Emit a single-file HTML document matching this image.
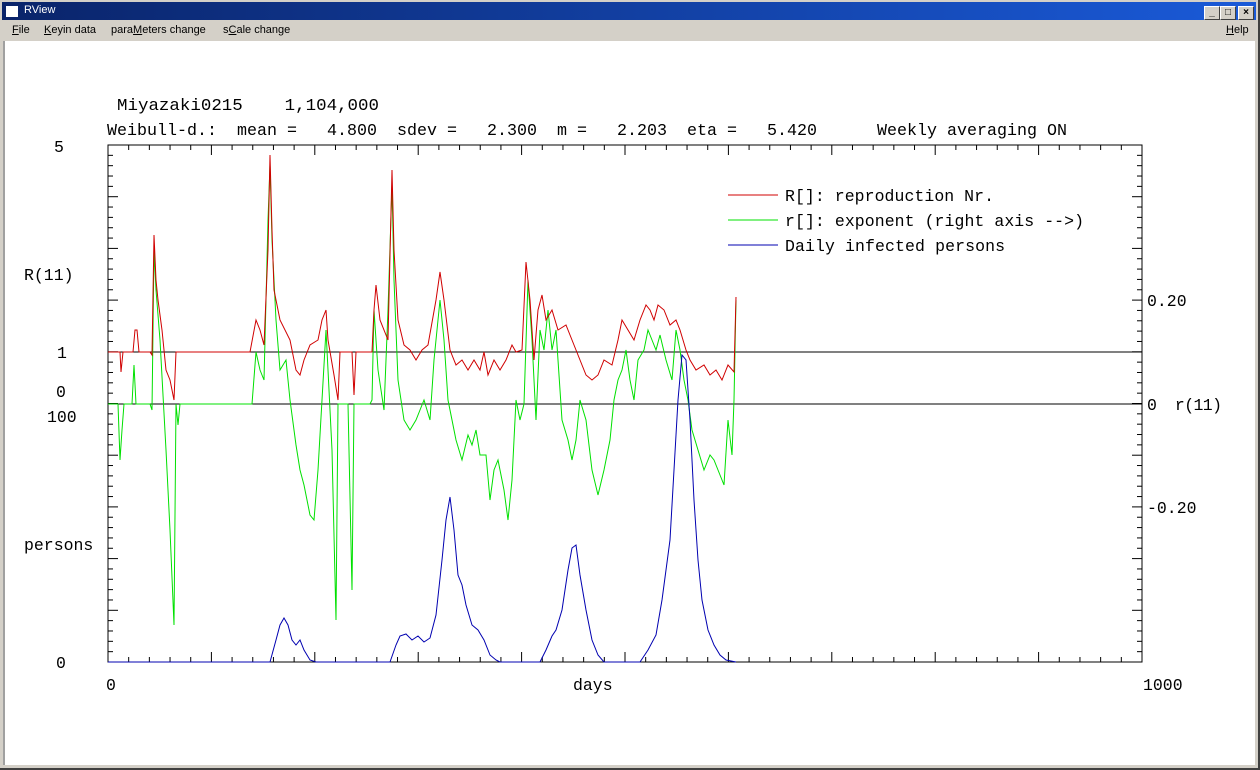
<!DOCTYPE html>
<html><head><style>
body{margin:0;width:1260px;height:770px;overflow:hidden;background:#d4d0c8;font-family:"Liberation Sans",Arial,sans-serif;}
#win{position:absolute;left:0;top:0;width:1258px;height:768px;border-right:2px solid #404040;border-bottom:2px solid #404040;background:#d4d0c8}
#title{position:absolute;left:2px;top:2px;width:1254px;height:18px;background:linear-gradient(90deg,#0a246a,#1a5ad8);}
#title span{position:absolute;left:22px;top:2px;color:#fff;font-size:11px}
#ico{position:absolute;left:4px;top:4px;width:12px;height:9px;background:#fff;border-top:2px solid #fff}
.b{position:absolute;top:4px;width:14px;height:12px;background:#d4d0c8;border:1px solid;border-color:#fff #404040 #404040 #fff;font-size:10px;line-height:12px;text-align:center;font-weight:bold}
#menu{position:absolute;left:2px;top:21px;width:1254px;height:19px;font-size:11px}
#menu span{position:absolute;top:3px}
#client{position:absolute;left:3px;top:41px;width:1250px;height:724px;background:#fff;border-left:2px solid #a0a0a0}
svg text{white-space:pre}
</style></head><body><div id="win">
<div id="title"><div id="ico"></div><span>RView</span>
<div class="b" style="left:1202px">_</div><div class="b" style="left:1218px">□</div><div class="b" style="left:1236px">×</div></div>
<div id="menu"><span style="left:10px"><u>F</u>ile</span><span style="left:42px"><u>K</u>eyin data</span><span style="left:109px">para<u>M</u>eters change</span><span style="left:221px">s<u>C</u>ale change</span><span style="left:1224px"><u>H</u>elp</span></div>
<div id="client"></div>
<svg width="1260" height="770" style="position:absolute;left:0;top:0" font-family="Liberation Mono,monospace" font-size="16.5" xml:space="preserve">
<g fill="#000">
<text x="117" y="110" textLength="262" lengthAdjust="spacingAndGlyphs">Miyazaki0215    1,104,000</text>
<text x="107" y="135" textLength="960" lengthAdjust="spacingAndGlyphs">Weibull-d.:  mean =   4.800  sdev =   2.300  m =   2.203  eta =   5.420      Weekly averaging ON</text>
<text x="54" y="152">5</text><text x="24" y="280">R(11)</text><text x="57" y="358">1</text><text x="56" y="397">0</text><text x="47" y="422">100</text><text x="24" y="550">persons</text><text x="56" y="668">0</text>
<text x="106" y="690">0</text><text x="573" y="690">days</text><text x="1143" y="690">1000</text>
<text x="1147" y="306">0.20</text><text x="1147" y="410" textLength="75">0  r(11)</text><text x="1147" y="513">-0.20</text>
<text x="785" y="201" textLength="209">R[]: reproduction Nr.</text><text x="785" y="226" textLength="299">r[]: exponent (right axis --&gt;)</text><text x="785" y="251" textLength="220">Daily infected persons</text>
</g>
<rect x="108" y="145" width="1034" height="517" fill="none" stroke="#000"/>
<line x1="108" y1="352" x2="1142" y2="352" stroke="#000"/><line x1="108" y1="404" x2="1142" y2="404" stroke="#000"/>
<g stroke="#000" id="ticks"></g>
<line x1="728" y1="195" x2="778" y2="195" stroke="#d00000"/><line x1="728" y1="220" x2="778" y2="220" stroke="#00e000"/><line x1="728" y1="245" x2="778" y2="245" stroke="#0000b0"/>
<polyline fill="none" stroke="#00e000" points="108,404 118,404 120,460 122,430 124,404 132,404 134,365 136,404 150,404 152,410 154,250 156,290 160,340 166,450 170,530 174,625 176,404 178,425 180,404 252,404 256,352 260,370 264,380 268,220 270,165 272,240 276,320 280,370 286,360 290,400 296,445 300,470 304,485 310,515 314,520 318,470 322,400 326,330 328,370 332,450 336,620 338,404 348,404 352,590 354,404 370,404 372,400 374,310 378,370 384,410 388,310 392,185 394,280 398,380 404,420 410,430 416,420 420,410 424,400 430,420 434,360 440,300 444,340 448,400 452,420 456,440 462,460 468,435 472,445 476,430 480,455 486,455 490,500 494,470 498,460 504,490 508,520 512,480 516,400 520,420 524,404 528,280 532,340 536,420 540,330 544,350 548,310 552,350 556,330 562,420 568,440 572,460 576,440 580,400 586,420 592,470 598,495 604,470 610,440 614,400 618,380 622,370 626,350 630,380 634,400 638,360 644,350 648,330 652,340 656,350 660,335 666,360 672,380 676,330 680,350 684,380 688,400 692,430 698,450 704,470 710,455 714,460 718,470 724,485 728,420 732,455 734,400 736,300"/>
<polyline fill="none" stroke="#d00000" points="108,352 120,352 121,372 123,352 133,352 135,330 137,330 139,352 150,352 152,355 154,235 156,280 158,300 162,330 166,370 170,380 174,400 176,352 178,352 250,352 256,320 260,330 264,345 268,250 270,155 272,230 274,290 280,320 290,340 296,370 300,375 304,360 310,345 318,340 322,320 326,310 328,340 334,375 338,400 340,352 352,352 354,395 356,352 372,352 374,310 376,285 380,320 388,340 392,170 394,250 398,320 404,345 410,350 416,360 422,350 428,345 436,300 440,272 444,300 450,350 456,365 462,360 468,370 474,360 480,370 484,352 488,375 494,360 500,370 506,360 512,345 516,352 522,350 526,262 530,300 534,360 538,310 542,295 546,320 552,310 558,330 566,325 574,345 580,360 586,375 592,380 598,375 604,360 612,365 618,340 622,320 628,330 634,340 640,320 646,305 650,310 654,320 658,305 664,310 670,325 676,320 680,330 686,350 690,360 696,370 704,365 710,375 716,370 722,380 728,365 734,372 736,297"/>
<polyline fill="none" stroke="#0000b0" points="108,662 270,662 276,640 280,625 284,618 288,625 292,640 296,645 300,640 304,650 310,660 316,662 390,662 396,645 400,636 406,634 412,640 418,636 424,642 430,638 436,615 442,560 446,520 450,497 454,530 458,575 462,585 466,605 472,625 478,630 484,640 490,655 496,660 500,662 540,662 546,650 552,636 556,630 562,610 568,570 572,548 576,545 580,575 586,610 592,640 598,655 604,662 640,662 648,650 656,635 662,600 666,570 670,540 674,470 678,400 682,355 686,360 690,420 694,500 698,560 702,600 708,630 714,645 720,655 726,660 736,662"/>
</svg>
<script>
var g=document.getElementById('ticks'),s='';
for(var i=0;i<=50;i++){var y=145+i*10.34,L=(i%5==0)?10:5;s+='<line x1="108" y1="'+y+'" x2="'+(108+L)+'" y2="'+y+'"/><line x1="1142" y1="'+y+'" x2="'+(1142-L)+'" y2="'+y+'"/>';}
for(var i=0;i<=50;i++){var x=108+i*20.68,L=(i%5==0)?10:5;s+='<line x1="'+x+'" y1="662" x2="'+x+'" y2="'+(662-L)+'"/><line x1="'+x+'" y1="145" x2="'+x+'" y2="'+(145+L)+'"/>';}
g.innerHTML=s;
</script>
</div></body></html>
